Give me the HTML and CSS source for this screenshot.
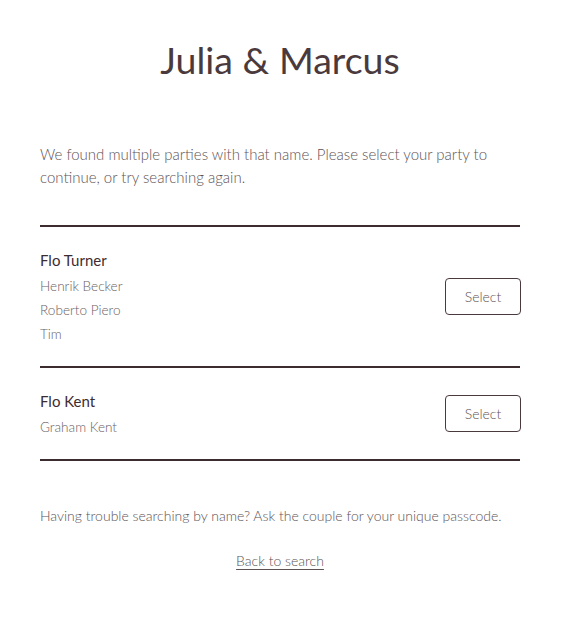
FILE: index.html
```html
<!DOCTYPE html>
<html lang="en">
<head>
<meta charset="utf-8">
<title>Julia &amp; Marcus</title>
<link rel="stylesheet" href="styles.css">
</head>
<body>
<main class="page">
  <h1 class="title">Julia &amp; Marcus</h1>
  <p class="intro">We found multiple parties with that name. Please select your party to continue, or try searching again.</p>
  <ul class="parties">
    <li class="party">
      <div class="party-info">
        <div class="party-name">Flo Turner</div>
        <div class="guest">Henrik Becker</div>
        <div class="guest">Roberto Piero</div>
        <div class="guest">Tim</div>
      </div>
      <button class="select-btn" type="button">Select</button>
    </li>
    <li class="party">
      <div class="party-info">
        <div class="party-name">Flo Kent</div>
        <div class="guest">Graham Kent</div>
      </div>
      <button class="select-btn" type="button">Select</button>
    </li>
  </ul>
  <p class="help">Having trouble searching by name? Ask the couple for your unique passcode.</p>
  <div class="back"><a href="#" class="back-link">Back to search</a></div>
</main>
</body>
</html>
```
FILE: styles.css
```css
html, body {
  margin: 0;
  padding: 0;
  background: #ffffff;
}
body {
  font-family: "Lato", "Open Sans", sans-serif;
  font-weight: 300;
  color: #5f5557;
}
.page {
  width: 480px;
  padding: 0 40px;
  box-sizing: content-box;
}
.title {
  margin: 0;
  padding-top: 32px;
  text-align: center;
  font-weight: 400;
  font-size: 37.5px;
  line-height: 56px;
  color: #4a3a3d;
}
.intro {
  margin: 55px 0 0;
  font-size: 15px;
  line-height: 23px;
  color: #5d5355;
}
.parties {
  list-style: none;
  margin: 36px 0 0;
  padding: 0;
  border-top: 2px solid #3d2c2f;
}
.party {
  display: flex;
  align-items: center;
  justify-content: space-between;
  padding: 20px 0;
  border-bottom: 2px solid #3d2c2f;
}
.party-name {
  font-size: 15px;
  font-weight: 400;
  line-height: 27px;
  color: #3d2c2f;
}
.guest {
  font-size: 13.6px;
  line-height: 24px;
  color: #6a6163;
}
.select-btn {
  width: 76px;
  height: 37px;
  margin-right: -1px;
  background: #fff;
  border: 1px solid #4a3a3d;
  border-radius: 4px;
  font-family: inherit;
  font-weight: 300;
  font-size: 14px;
  color: #5d5355;
  cursor: pointer;
}
.help {
  margin: 44px 0 0;
  font-size: 14px;
  line-height: 22px;
  color: #5d5355;
}
.back {
  margin-top: 23px;
  text-align: center;
  font-size: 14px;
  line-height: 22px;
}
.back-link {
  color: #5d5355;
  text-decoration: underline;
  text-underline-offset: 3px;
}
```
